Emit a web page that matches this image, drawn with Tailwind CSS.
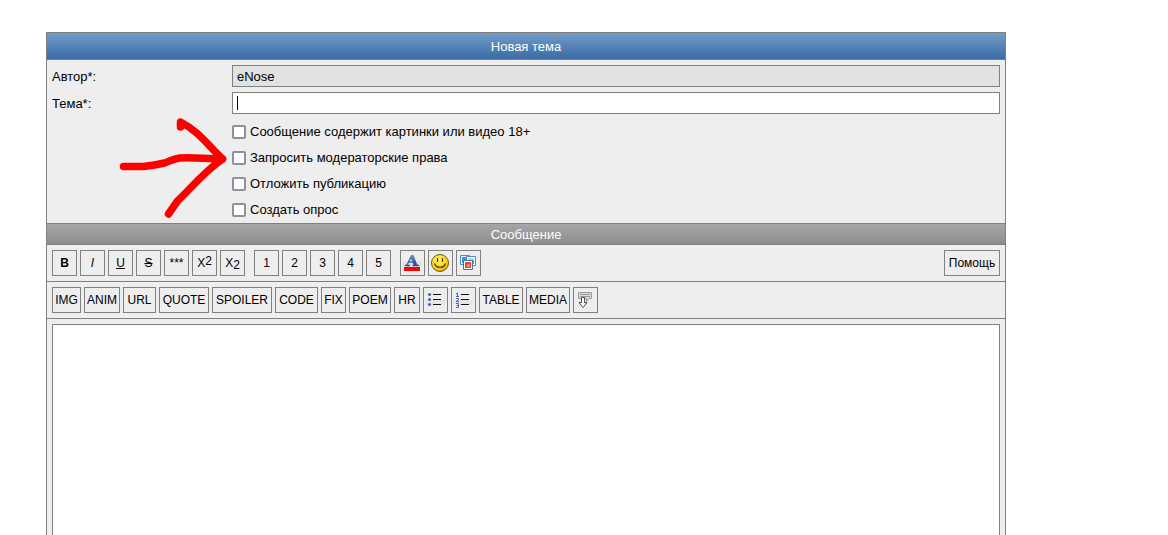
<!DOCTYPE html>
<html lang="ru">
<head>
<meta charset="utf-8">
<meta name="viewport" content="width=device-width, initial-scale=1">
<title>Новая тема</title>
<script src="https://cdn.jsdelivr.net/npm/@tailwindcss/browser@4"></script>
</head>
<body class="h-screen overflow-hidden bg-white font-['Liberation_Sans',Arial,sans-serif] text-[13px] leading-4 text-black">
<form class="relative mt-8 mr-[162px] ml-[46px] border border-[#808080] bg-[#eeeeee]">
  <h1 class="flex h-[27px] items-center justify-center border-b border-[#808080] bg-linear-to-b from-[#739dc8] to-[#3a6ba5] pt-px text-white">Новая тема</h1>

  <div class="grid grid-cols-[180px_1fr] items-center gap-y-[5px] px-[5px] pt-[5px]">
    <label for="author" class="pt-0.5">Автор*:</label>
    <input id="author" type="text" value="eNose" readonly class="h-[22px] w-full border border-[#808080] bg-[#e2e2e2] px-1 outline-none">
    <label for="topic" class="pt-0.5">Тема*:</label>
    <div class="relative">
      <input id="topic" type="text" class="block h-[22px] w-full border border-[#808080] bg-white px-1 outline-none">
      <span class="absolute top-1 left-[5px] h-[14px] w-px bg-black"></span>
    </div>
  </div>

  <div class="flex flex-col items-start pt-[5px] pl-[185px]">
    <label class="flex h-[26px] items-center gap-1"><input type="checkbox" class="size-[14px] appearance-none rounded-xs border-2 border-[#8f8f9d] bg-white">Сообщение содержит картинки или видео 18+</label>
    <label class="flex h-[26px] items-center gap-1"><input type="checkbox" class="size-[14px] appearance-none rounded-xs border-2 border-[#8f8f9d] bg-white">Запросить модераторские права</label>
    <label class="flex h-[26px] items-center gap-1"><input type="checkbox" class="size-[14px] appearance-none rounded-xs border-2 border-[#8f8f9d] bg-white">Отложить публикацию</label>
    <label class="flex h-[26px] items-center gap-1"><input type="checkbox" class="size-[14px] appearance-none rounded-xs border-2 border-[#8f8f9d] bg-white">Создать опрос</label>
  </div>

  <h2 class="flex h-[22px] items-center justify-center border-y border-[#808080] bg-linear-to-b from-[#a6a6a6] to-[#8e8e8e] pt-0.5 text-white">Сообщение</h2>

  <div class="flex gap-[9px] border-b border-[#808080] p-[5px] text-xs">
    <div class="flex gap-[3px]">
      <button type="button" class="h-[26px] w-[25px] border border-[#808080] font-bold">B</button>
      <button type="button" class="h-[26px] w-[25px] border border-[#808080] italic">I</button>
      <button type="button" class="h-[26px] w-[25px] border border-[#808080] underline">U</button>
      <button type="button" class="h-[26px] w-[25px] border border-[#808080] line-through">S</button>
      <button type="button" class="h-[26px] w-[25px] border border-[#808080]">***</button>
      <button type="button" class="flex h-[26px] w-[25px] items-center justify-center border border-[#808080]">X<sup class="static pb-1 text-xs">2</sup></button>
      <button type="button" class="flex h-[26px] w-[25px] items-center justify-center border border-[#808080]">X<sub class="static pt-1 text-xs">2</sub></button>
    </div>
    <div class="flex gap-[3px]">
      <button type="button" class="h-[26px] w-[25px] border border-[#808080]">1</button>
      <button type="button" class="h-[26px] w-[25px] border border-[#808080]">2</button>
      <button type="button" class="h-[26px] w-[25px] border border-[#808080]">3</button>
      <button type="button" class="h-[26px] w-[25px] border border-[#808080]">4</button>
      <button type="button" class="h-[26px] w-[25px] border border-[#808080]">5</button>
    </div>
    <div class="flex gap-[3px]">
      <button type="button" aria-label="Цвет" class="flex h-[26px] w-[25px] items-center border border-[#808080] pl-px">
        <svg class="size-5" viewBox="0 0 20 20">
          <defs><linearGradient id="ink" x2="0" y2="1"><stop stop-color="#6f92cf"/><stop offset="1" stop-color="#233f76"/></linearGradient></defs>
          <path d="M0 8H20V14H0Z" fill="#e2e3e7"/>
          <path d="M5 12 9.500 3M6 9h6" fill="none" stroke="#47649c" stroke-width="1.500"/>
          <path d="M9 2h2.500l4 10.500h-3.500L8.500 4.500Z" fill="url(#ink)"/>
          <path d="M3 12.500h5M10.500 12.500h6.500" stroke="#2f4d85" stroke-width="1.500"/>
          <path d="M2 14H18V18H2Z" fill="#f00"/>
        </svg>
      </button>
      <button type="button" aria-label="Смайлы" class="flex h-[26px] w-[25px] items-center border border-[#808080] pl-px">
        <svg class="size-5" viewBox="0 0 20 20">
          <defs><radialGradient id="face" cx=".4" cy=".3" r=".75"><stop stop-color="#fff36b"/><stop offset=".65" stop-color="#fbd51d"/><stop offset="1" stop-color="#d79b0d"/></radialGradient></defs>
          <circle cx="10" cy="10" r="8.500" fill="url(#face)" stroke="#705719"/>
          <path d="M7.500 5v4M12.500 5v4" stroke="#4d3908" stroke-width="1.200"/>
          <path d="M4.500 10.500c1.500 5 9.500 5 11 0" fill="none" stroke="#4d3908" stroke-width="1.200"/>
        </svg>
      </button>
      <button type="button" aria-label="Картинки" class="flex h-[26px] w-[25px] items-center border border-[#808080] pl-px">
        <svg class="size-5" viewBox="0 0 20 20">
          <path d="M2.500 2.500h9v9h-9z" fill="#fff" stroke="#5688bd"/><path d="M4 4h6v6H4z" fill="#2b9ae8"/>
          <path d="M8.500 3.500h9v9h-9z" fill="#fff" stroke="#5688bd"/><path d="M10 5h6v6h-6z" fill="#6ab33c"/><path d="M10 5h6v2h-6z" fill="#a8d7ef"/>
          <path d="M5.500 7.500h9v9h-9z" fill="#fff" stroke="#4475a9"/><path d="M7 9h6v6H7z" fill="#e94a26"/><path d="M9 11h3v3H9z" fill="#f58a5e"/>
        </svg>
      </button>
    </div>
    <button type="button" class="ml-auto h-[26px] w-14 border border-[#808080]">Помощь</button>
  </div>

  <div class="flex gap-[3px] border-b border-[#808080] p-[5px] text-xs">
    <button type="button" class="h-[26px] w-[29px] border border-[#808080]">IMG</button>
    <button type="button" class="h-[26px] w-9 border border-[#808080]">ANIM</button>
    <button type="button" class="h-[26px] w-[33px] border border-[#808080]">URL</button>
    <button type="button" class="h-[26px] w-[50px] border border-[#808080]">QUOTE</button>
    <button type="button" class="h-[26px] w-[60px] border border-[#808080]">SPOILER</button>
    <button type="button" class="h-[26px] w-[43px] border border-[#808080]">CODE</button>
    <button type="button" class="h-[26px] w-[25px] border border-[#808080]">FIX</button>
    <button type="button" class="h-[26px] w-[42px] border border-[#808080]">POEM</button>
    <button type="button" class="h-[26px] w-[26px] border border-[#808080]">HR</button>
    <button type="button" aria-label="Маркированный список" class="flex h-[26px] w-[25px] items-center border border-[#808080] pl-px">
      <svg class="size-5" viewBox="0 0 20 20">
        <path d="M0 10H20V15H0Z" fill="#e4e5e8"/>
        <g fill="#4a6aa8"><circle cx="4.500" cy="4.500" r="1.600"/><circle cx="4.500" cy="9.500" r="1.600"/><circle cx="4.500" cy="14.500" r="1.600"/></g>
        <path d="M8 4.500h8M8 9.500h8M8 14.500h8" stroke="#111"/>
      </svg>
    </button>
    <button type="button" aria-label="Нумерованный список" class="flex h-[26px] w-[25px] items-center border border-[#808080] pl-px">
      <svg class="size-5" viewBox="0 0 20 20">
        <path d="M0 10H20V15H0Z" fill="#e4e5e8"/>
        <path d="M3 4l1.500-1v3.500M3 6.500h3M3 8.500h2.500v1.500L3 11.500h3M3 13.500h2.500v4H3M3.500 15.500h2" fill="none" stroke="#4468b0"/>
        <path d="M8 4.500h8M8 9.500h8M8 14.500h8" stroke="#111"/>
      </svg>
    </button>
    <button type="button" class="h-[26px] w-11 border border-[#808080]">TABLE</button>
    <button type="button" class="h-[26px] w-11 border border-[#808080]">MEDIA</button>
    <button type="button" aria-label="Вставить цитату" class="flex h-[26px] w-[25px] items-center border border-[#808080] pl-px">
      <svg class="size-5" viewBox="0 0 20 20">
        <path d="M3.500 2.500h13v6h-2.500l-2.500 3v-3h-8z" fill="#ddd" stroke="#999"/>
        <path d="M5 4.500h10M5 6.500h10" stroke="#999"/>
        <path d="M6.500 7.500h3v5h2.500l-4 5-4-5h2.500z" fill="#fff" stroke="#4d4d4d"/>
      </svg>
    </button>
  </div>

  <div class="p-[5px]">
    <textarea aria-label="Сообщение" class="block h-[320px] w-full resize-none border border-[#808080] bg-white p-1 outline-none"></textarea>
  </div>

  <svg class="pointer-events-none absolute top-[77px] left-[63px] h-[120px] w-[130px]" viewBox="110 110 130 120" fill="none" stroke="#f00" stroke-width="7.500" stroke-linecap="round" stroke-linejoin="round">
    <path d="M123.500 166.500h20c8-1 14-2 21-3.500 6-2 8-4 15-5 14-1 26 1 43 1"/>
    <path d="M180.500 127v-5c18 9 28 24 42 37-20 14-33 31-45 42l-9 13"/>
  </svg>
</form>
</body>
</html>
